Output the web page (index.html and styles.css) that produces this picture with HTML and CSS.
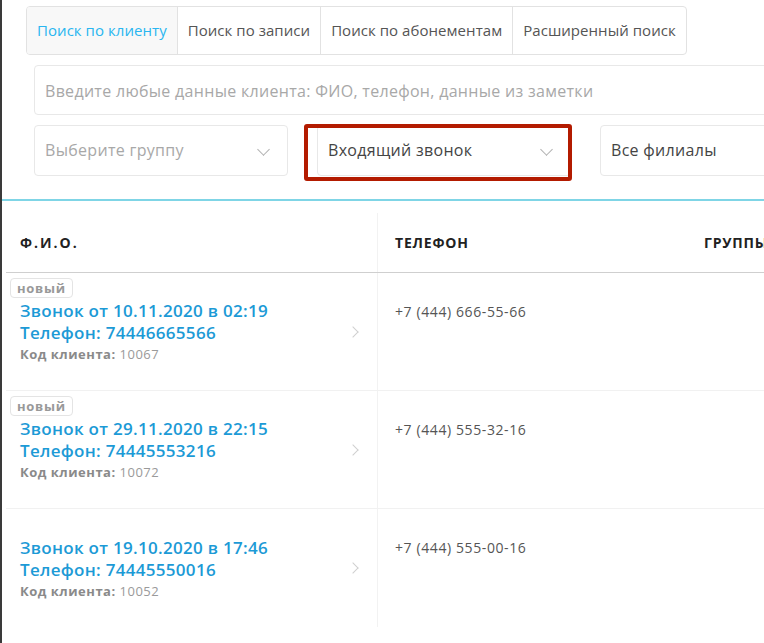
FILE: index.html
```html
<!DOCTYPE html>
<html lang="ru">
<head>
  <meta charset="UTF-8" />
  <title>Клиенты</title>
  <link rel="stylesheet" href="styles.css">
</head>
<body>
  <div class="page">
    <div class="tabs">
      <div class="tab active">Поиск по клиенту</div>
      <div class="tab">Поиск по записи</div>
      <div class="tab">Поиск по абонементам</div>
      <div class="tab">Расширенный поиск</div>
    </div>

    <div class="search">Введите любые данные клиента: ФИО, телефон, данные из заметки</div>

    <div class="filters">
      <div class="select placeholder">Выберите группу <span class="chev"></span></div>
      <div class="select-wrap">
        <div class="select">Входящий звонок <span class="chev"></span></div>
        <span class="mark"></span>
      </div>
      <div class="select wide">Все филиалы</div>
    </div>

    <div class="accent"></div>

    <div class="table">
      <div class="row head">
        <div class="cell name">Ф.И.О.</div>
        <div class="cell phone">ТЕЛЕФОН</div>
        <div class="cell group">ГРУППЫ</div>
      </div>

      <div class="row">
        <div class="cell name">
          <span class="badge">новый</span>
          <div class="info">
            <div class="title">Звонок от 10.11.2020 в 02:19</div>
            <div class="title">Телефон: 74446665566</div>
            <div class="code"><b>Код клиента:</b> 10067</div>
          </div>
          <span class="arrow"></span>
        </div>
        <div class="cell phone">+7 (444) 666-55-66</div>
        <div class="cell group"></div>
      </div>

      <div class="row">
        <div class="cell name">
          <span class="badge">новый</span>
          <div class="info">
            <div class="title">Звонок от 29.11.2020 в 22:15</div>
            <div class="title">Телефон: 74445553216</div>
            <div class="code"><b>Код клиента:</b> 10072</div>
          </div>
          <span class="arrow"></span>
        </div>
        <div class="cell phone">+7 (444) 555-32-16</div>
        <div class="cell group"></div>
      </div>

      <div class="row last">
        <div class="cell name">
          <div class="info">
            <div class="title">Звонок от 19.10.2020 в 17:46</div>
            <div class="title">Телефон: 74445550016</div>
            <div class="code"><b>Код клиента:</b> 10052</div>
          </div>
          <span class="arrow"></span>
        </div>
        <div class="cell phone">+7 (444) 555-00-16</div>
        <div class="cell group"></div>
      </div>
    </div>
  </div>
</body>
</html>
```

FILE: styles.css
```css
* {
  box-sizing: border-box;
}

html,
body {
  height: 100%;
}

body {
  margin: 0;
  font-family: 'Open Sans', sans-serif;
  background-color: #fff;
  border-left: 2px solid #3a3a3a;
  overflow: hidden;
  color: #333;
}

.page {
  width: 960px;
  padding-top: 6px;
}

/* tabs */
.tabs {
  display: inline-flex;
  margin-left: 24px;
  border: 1px solid #e2e2e2;
  border-radius: 4px;
  overflow: hidden;
}

.tab {
  height: 47px;
  line-height: 46px;
  padding: 0 10px;
  font-size: 15px;
  letter-spacing: 0.05px;
  color: #555;
  border-left: 1px solid #e2e2e2;
}

.tab:first-child {
  border-left: none;
}

.tab.active {
  background-color: #f8f8f8;
  color: #29b6f0;
}

/* search */
.search {
  margin: 10px 0 0 32px;
  height: 50px;
  line-height: 50px;
  padding: 0 10px;
  border: 1px solid #e8e8e8;
  border-radius: 4px;
  font-size: 16px;
  letter-spacing: 0.3px;
  color: #a8a8a8;
}

.filters {
  display: flex;
  gap: 29px;
  margin: 10px 0 0 32px;
}

.select {
  position: relative;
  width: 254px;
  height: 51px;
  line-height: 48px;
  padding: 0 10px;
  border: 1px solid #e8e8e8;
  border-radius: 4px;
  font-size: 16px;
  letter-spacing: 0.3px;
  color: #444;
}

.select.placeholder {
  color: #a8a8a8;
}

.select.wide {
  width: 300px;
}

.chev {
  position: absolute;
  right: 19px;
  top: 19px;
  width: 9px;
  height: 9px;
  border-right: 1.5px solid #b0b0b0;
  border-bottom: 1.5px solid #b0b0b0;
  transform: rotate(45deg);
}

.select-wrap {
  position: relative;
}

/* red highlight drawn over the selected filter */
.mark {
  position: absolute;
  left: -13px;
  right: -1px;
  top: -1px;
  bottom: -5px;
  border: 4px solid #b31b00;
  border-radius: 3px;
}

.accent {
  height: 2px;
  margin-top: 23px;
  background-color: #7fd5e6;
}

/* table */
.table {
  margin: 12px 0 0 4px;
}

.row {
  display: grid;
  grid-template-columns: 371px 310px 1fr;
  height: 118px;
  border-bottom: 1px solid #f1f1f1;
}

.row.last {
  border-bottom: none;
}

.row.head {
  height: 60px;
  border-bottom: 1px solid #cfcfcf;
}

.cell {
  position: relative;
}

.cell.phone {
  border-left: 1px solid #f2f2f2;
  padding: 29px 17px 0;
  font-size: 14px;
  letter-spacing: 0.6px;
  color: #555;
}

.cell.group {
  padding: 0 17px;
}

.head .cell {
  padding-top: 20px;
  font-size: 14px;
  font-weight: 700;
  letter-spacing: 0.8px;
  color: #222;
}

.head .cell.name {
  padding-left: 14px;
  letter-spacing: 2px;
}

.cell.name {
  display: flex;
  align-items: center;
  padding: 0 14px;
}

.info {
  flex: 1;
  padding-top: 1px;
}

.title {
  font-size: 17px;
  font-weight: 600;
  line-height: 22px;
  letter-spacing: 0.3px;
  color: #1c9ad6;
}

.code {
  font-size: 13px;
  line-height: 20px;
  letter-spacing: 0.5px;
  color: #9a9a9a;
}

.code b {
  color: #8a8a8a;
}

.badge {
  position: absolute;
  top: 5px;
  left: 4px;
  height: 20px;
  line-height: 18px;
  padding: 0 6px;
  border: 1px solid #e4e4e4;
  border-radius: 4px;
  font-size: 13px;
  font-weight: 700;
  letter-spacing: 0.7px;
  color: #999;
}

.arrow {
  width: 8px;
  height: 8px;
  margin-right: 6px;
  border-right: 1.5px solid #cfcfcf;
  border-top: 1.5px solid #cfcfcf;
  transform: rotate(45deg);
}
```
